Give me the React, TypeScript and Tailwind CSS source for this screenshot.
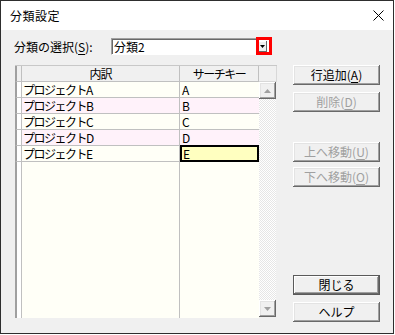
import React from "react";

const FONT = { fontFamily: '"Noto Sans CJK JP", "Noto Sans", sans-serif' };

function Btn({ label, u, disabled, isDefault }: { label: string; u: string; disabled?: boolean; isDefault?: boolean }) {
  const idx = label.indexOf("(");
  const pre = idx >= 0 ? label.slice(0, idx) : label;
  return (
    <div
      className={
        "w-[87px] h-[20px] flex items-center justify-center text-[12px] leading-none bg-[#f0f0f0] " +
        (isDefault
          ? "border border-[#5a5a5a] shadow-[inset_-1px_-1px_#696969,inset_1px_1px_#ffffff,inset_-2px_-2px_#a0a0a0] "
          : "shadow-[inset_-1px_-1px_#696969,inset_1px_1px_#ffffff,inset_-2px_-2px_#a0a0a0,inset_2px_2px_#e3e3e3] ") +
        (disabled ? "text-[#a0a0a0]" : "text-black")
      }
    >
      <span>
        {pre}
        {u ? (
          <>
            (<span className="underline underline-offset-2">{u}</span>)
          </>
        ) : null}
      </span>
    </div>
  );
}

const rows = [
  { name: "プロジェクトA", key: "A", pink: false },
  { name: "プロジェクトB", key: "B", pink: true },
  { name: "プロジェクトC", key: "C", pink: false },
  { name: "プロジェクトD", key: "D", pink: true },
  { name: "プロジェクトE", key: "E", pink: false },
];

function ScrollBtn({ up }: { up?: boolean }) {
  return (
    <div className="w-[17px] h-[17px] bg-[#f0f0f0] flex items-center justify-center shadow-[inset_-1px_-1px_#696969,inset_1px_1px_#ffffff,inset_-2px_-2px_#a0a0a0,inset_2px_2px_#e3e3e3]">
      <svg width="7" height="4" viewBox="0 0 7 4">
        {up ? <path d="M0 4 L3.5 0 L7 4 Z" fill="#a0a0a0" /> : <path d="M0 0 L3.5 4 L7 0 Z" fill="#a0a0a0" />}
      </svg>
    </div>
  );
}

export default function App() {
  return (
    <div className="w-[395px] h-[335px] bg-white" style={FONT}>
      <div className="w-[394px] h-[334px] border border-[#2e2e2e] flex flex-col bg-[#f0f0f0]">
        {/* title bar */}
        <div className="h-[29px] bg-white flex items-center justify-between pl-[9px] pr-[9px] shrink-0">
          <span className="text-[12px] text-black tracking-[0.5px]">分類設定</span>
          <svg width="11" height="11" viewBox="0 0 11 11">
            <path d="M0.5 0.5 L10.5 10.5 M10.5 0.5 L0.5 10.5" stroke="#000" strokeWidth="1" />
          </svg>
        </div>
        {/* body */}
        <div className="flex-1 pl-[13px] pt-[8px] text-[12px] text-black">
          <div className="flex items-center h-[17px]">
            <div className="w-[97px] leading-none">
              分類の選択(<span className="underline underline-offset-2">S</span>):
            </div>
            <div className="relative w-[160px] h-[17px] bg-white border-t border-l border-[#a0a0a0] border-b border-r border-b-[#ffffff] border-r-[#ffffff] shadow-[inset_1px_1px_#696969] flex items-center">
              <span className="pl-[2px] leading-none">分類2</span>
              <div className="absolute right-[3px] top-[2px] w-[10px] h-[11px] bg-[#f0f0f0] shadow-[inset_-1px_-1px_#696969,inset_1px_1px_#ffffff] flex items-center justify-center">
                <svg width="5" height="3" viewBox="0 0 5 3">
                  <path d="M0 0 L2.5 3 L5 0 Z" fill="#000" />
                </svg>
              </div>
              <div className="absolute right-[-2px] top-[-2px] w-[16px] h-[18px] border-[3px] border-[#ff0000]" />
            </div>
          </div>
          <div className="flex mt-[10px]">
            {/* grid */}
            <div className="ml-[1px] w-[262px] h-[253px] flex flex-col bg-[#f0f0f0]">
              {/* header */}
              <div className="flex h-[17px] shrink-0 border-t border-[#c8c8c8]">
                <div className="w-[7px] border-l-2 border-l-[#a0a0a0] border-r border-r-[#c0c0c0] border-b border-b-[#c0c0c0]" />
                <div className="w-[158px] border-r border-b border-[#c0c0c0] flex items-center justify-center leading-none tracking-[-1px]">
                  内訳
                </div>
                <div className="w-[79px] border-r border-b border-[#c0c0c0] flex items-center justify-center leading-none tracking-[-1.5px]">
                  サーチキー
                </div>
                <div className="w-[18px] border-r border-b border-[#d8d8d8]" />
              </div>
              <div className="flex flex-1 min-h-0">
                {/* rows area */}
                <div className="w-[244px] flex flex-col bg-[#fffff7]">
                  {rows.map((r, i) => (
                    <div key={i} className={"flex h-[16px] shrink-0 " + (r.pink ? "bg-[#fff2fa]" : "bg-[#fffff7]")}>
                      <div className="w-[7px] bg-white border-l-2 border-l-[#a0a0a0] border-r border-r-[#c0c0c0] border-b border-b-[#c0c0c0]" />
                      <div className="w-[158px] border-r border-b border-[#c0c0c0] flex items-center pl-[1px] leading-none tracking-[-1.5px] overflow-hidden whitespace-nowrap">
                        {r.name}
                      </div>
                      {i === 4 ? (
                        <div className="w-[79px] -mt-[1px] h-[17px] bg-[#ffffc0] border-2 border-black flex items-center pl-[1px] leading-none">
                          {r.key}
                        </div>
                      ) : (
                        <div className="w-[79px] border-b border-[#c0c0c0] flex items-center pl-[2px] leading-none">
                          {r.key}
                        </div>
                      )}
                    </div>
                  ))}
                  <div className="flex flex-1">
                    <div className="w-[7px] bg-white border-l-2 border-l-[#a0a0a0] border-r border-r-[#c0c0c0]" />
                    <div className="w-[158px] border-r border-[#c0c0c0]" />
                    <div className="w-[79px]" />
                  </div>
                </div>
                {/* scrollbar */}
                <div className="w-[17px] flex flex-col bg-[repeating-conic-gradient(#e6e6e6_0%_25%,#ffffff_0%_50%)] bg-[length:2px_2px]">
                  <ScrollBtn up />
                  <div className="flex-1" />
                  <ScrollBtn />
                  <div className="h-[1px] bg-[#f0f0f0]" />
                </div>
              </div>
            </div>
            {/* buttons */}
            <div className="ml-[16px] flex flex-col">
              <Btn label="行追加(A)" u="A" />
              <div className="mt-[7px]">
                <Btn label="削除(D)" u="D" disabled />
              </div>
              <div className="mt-[30px]">
                <Btn label="上へ移動(U)" u="U" disabled />
              </div>
              <div className="mt-[5px]">
                <Btn label="下へ移動(O)" u="O" disabled />
              </div>
              <div className="mt-[88px]">
                <Btn label="閉じる" u="" isDefault />
              </div>
              <div className="mt-[7px]">
                <Btn label="ヘルプ" u="" />
              </div>
            </div>
          </div>
        </div>
      </div>
    </div>
  );
}
